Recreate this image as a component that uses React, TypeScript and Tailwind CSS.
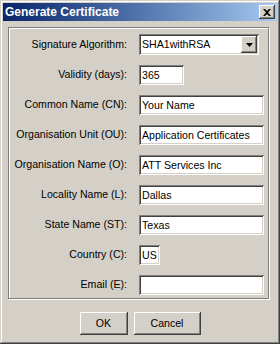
import React from "react";

const sunken =
  "bg-white shadow-[inset_1px_1px_0_#808080,inset_-1px_-1px_0_#ffffff,inset_2px_2px_0_#404040,inset_-2px_-2px_0_#d4d0c8]";
const raised =
  "bg-[#d4d0c8] shadow-[inset_-1px_-1px_0_#404040,inset_1px_1px_0_#ffffff,inset_-2px_-2px_0_#808080,inset_2px_2px_0_#d4d0c8]";

function Field({ value, w }: { value: string; w: string }) {
  return (
    <div className={`${sunken} ${w} h-[20px] flex items-center pl-[3px] pt-[1px] text-black whitespace-nowrap overflow-hidden`}>
      {value}
    </div>
  );
}

function Row({ label, children }: { label: string; children: React.ReactNode }) {
  return (
    <div className="flex items-center">
      <div className="w-[119px] text-right pr-[1px] whitespace-nowrap">{label}</div>
      <div className="ml-[11px]">{children}</div>
    </div>
  );
}

export default function App() {
  return (
    <div className="w-[280px] h-[344px] bg-[#d4d0c8] p-[3px] flex flex-col text-[10.6px] font-['Liberation_Sans',Arial,sans-serif] text-black shadow-[inset_-1px_-1px_0_#404040,inset_1px_1px_0_#d4d0c8,inset_-2px_-2px_0_#808080,inset_2px_2px_0_#ffffff]">
      {/* Title bar */}
      <div className="h-[18px] flex items-center justify-between bg-gradient-to-r from-[#0a246a] to-[#a6caf0] pl-[2px] pr-[2px]">
        <span className="text-white font-bold text-[12px] leading-none">Generate Certificate</span>
        <div className={`${raised} w-[16px] h-[14px] flex items-center justify-center`}>
          <svg width="8" height="7" viewBox="0 0 8 7">
            <path d="M0 0h2l2 2 2-2h2L5 3.5 8 7H6L4 5 2 7H0l3-3.5z" fill="#000" />
          </svg>
        </div>
      </div>

      {/* Group box */}
      <div className="mt-[6px] ml-[5px] w-[261px] h-[272px] border border-[#808080] shadow-[1px_1px_0_#ffffff,inset_1px_1px_0_#ffffff] pt-[6px] flex flex-col gap-[10px]">
        <Row label="Signature Algorithm:">
          <div className={`${sunken} w-[120px] h-[21px] flex items-center justify-between pl-[3px] pr-[2px]`}>
            <span className="pt-[1px]">SHA1withRSA</span>
            <div className={`${raised} w-[16px] h-[17px] flex items-center justify-center`}>
              <svg width="7" height="4" viewBox="0 0 7 4">
                <path d="M0 0h7L3.5 4z" fill="#000" />
              </svg>
            </div>
          </div>
        </Row>
        <Row label="Validity (days):">
          <Field value="365" w="w-[45px]" />
        </Row>
        <Row label="Common Name (CN):">
          <Field value="Your Name" w="w-[125px]" />
        </Row>
        <Row label="Organisation Unit (OU):">
          <Field value="Application Certificates" w="w-[125px]" />
        </Row>
        <Row label="Organisation Name (O):">
          <Field value="ATT Services Inc" w="w-[125px]" />
        </Row>
        <Row label="Locality Name (L):">
          <Field value="Dallas" w="w-[125px]" />
        </Row>
        <Row label="State Name (ST):">
          <Field value="Texas" w="w-[125px]" />
        </Row>
        <Row label="Country (C):">
          <Field value="US" w="w-[21px]" />
        </Row>
        <Row label="Email (E):">
          <Field value="" w="w-[125px]" />
        </Row>
      </div>

      {/* Buttons */}
      <div className="mt-[13px] flex justify-center gap-[6px]">
        <button className={`${raised} w-[48px] h-[23px] flex items-center justify-center`}>OK</button>
        <button className={`${raised} w-[67px] h-[23px] flex items-center justify-center`}>Cancel</button>
      </div>
    </div>
  );
}
